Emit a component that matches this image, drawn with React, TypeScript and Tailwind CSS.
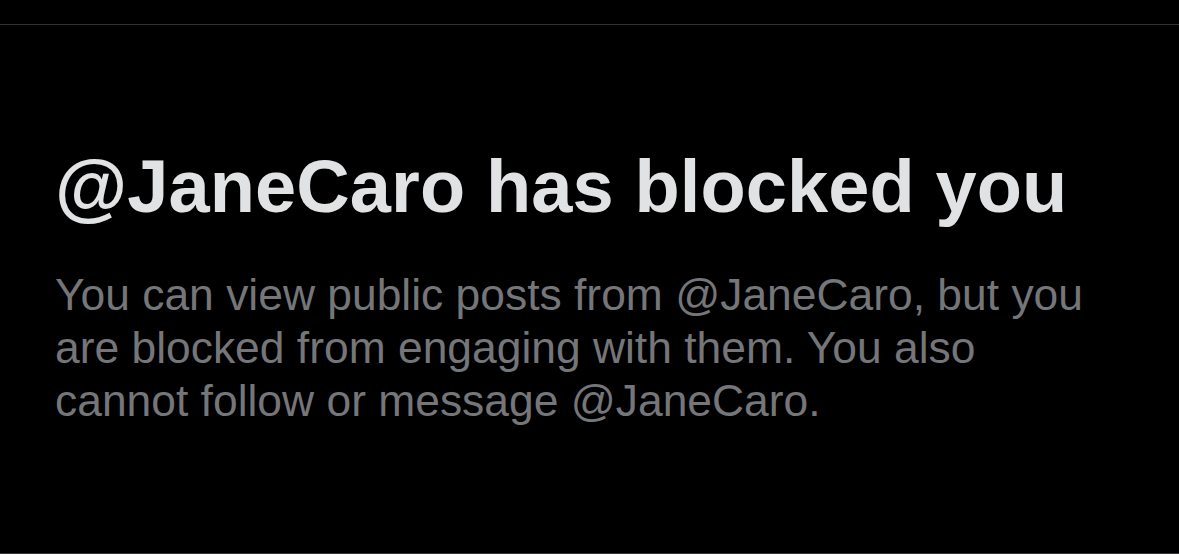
export default function App() {
  return (
    <div className="min-h-[554px] w-full bg-black font-['Liberation_Sans',Arial,sans-serif] border-b border-[#2f3336]">
      {/* top bar */}
      <div className="h-[25px] border-b border-[#2f3336]" />

      {/* Blocked message */}
      <div className="pl-[55px] pt-[125px]">
        <h1 className="text-[74px] leading-[74px] font-bold text-[#e1e2e3] tracking-[0.1px]">
          @JaneCaro has blocked you
        </h1>
        <p className="mt-[44px] max-w-[1040px] text-[44.4px] leading-[53px] text-[#747679]">
          You can view public posts from @JaneCaro, but you are blocked from engaging with them. You also cannot follow or message @JaneCaro.
        </p>
      </div>
    </div>
  );
}
